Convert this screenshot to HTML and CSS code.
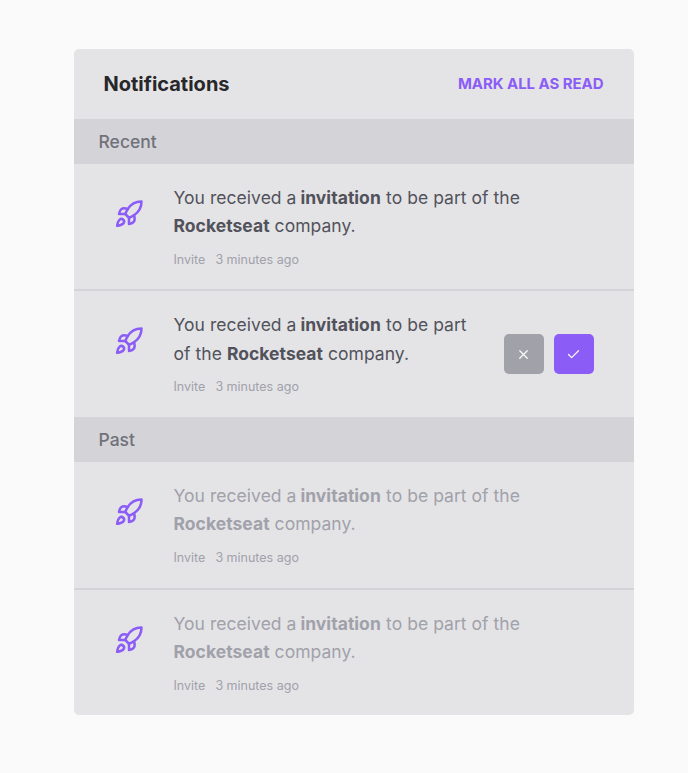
FILE: index.html
```html
<!DOCTYPE html>
<html lang="en">
<head>
<meta charset="utf-8">
<title>Notifications</title>
<link rel="stylesheet" href="styles.css">
</head>
<body>
<svg width="0" height="0" class="defs" aria-hidden="true">
  <symbol id="rocket" viewBox="0 0 24 24">
    <path d="M4.5 16.5c-1.5 1.26-2 5-2 5s3.74-.5 5-2c.71-.84.7-2.13-.09-2.91a2.18 2.18 0 0 0-2.91-.09z"/>
    <path d="m12 15-3-3a22 22 0 0 1 2-3.95A12.88 12.88 0 0 1 22 2c0 2.72-.78 7.5-6 11a22.35 22.35 0 0 1-4 2z"/>
    <path d="M9 12H4s.55-3.03 2-4c1.62-1.08 5 0 5 0"/>
    <path d="M12 15v5s3.03-.55 4-2c1.08-1.62 0-5 0-5"/>
  </symbol>
</svg>
<main class="panel">
  <header class="header">
    <h1>Notifications</h1>
    <button class="mark">MARK ALL AS READ</button>
  </header>
  <section>
    <h2 class="group">Recent</h2>
    <article class="item">
      <svg class="rocket"><use href="#rocket"/></svg>
      <div class="content">
        <p class="text">You received a <strong>invitation</strong> to be part of the <strong>Rocketseat</strong> company.</p>
        <div class="meta"><span>Invite</span><span>3 minutes ago</span></div>
      </div>
    </article>
    <article class="item">
      <svg class="rocket"><use href="#rocket"/></svg>
      <div class="content">
        <p class="text">You received a <strong>invitation</strong> to be part of the <strong>Rocketseat</strong> company.</p>
        <div class="meta"><span>Invite</span><span>3 minutes ago</span></div>
      </div>
      <div class="actions">
        <button class="action" aria-label="Decline"><svg viewBox="0 0 24 24"><path d="M18 6 6 18M6 6l12 12"/></svg></button>
        <button class="action accept" aria-label="Accept"><svg viewBox="0 0 24 24"><path d="M20 6 9 17l-5-5"/></svg></button>
      </div>
    </article>
  </section>
  <section>
    <h2 class="group">Past</h2>
    <article class="item past">
      <svg class="rocket"><use href="#rocket"/></svg>
      <div class="content">
        <p class="text">You received a <strong>invitation</strong> to be part of the <strong>Rocketseat</strong> company.</p>
        <div class="meta"><span>Invite</span><span>3 minutes ago</span></div>
      </div>
    </article>
    <article class="item past">
      <svg class="rocket"><use href="#rocket"/></svg>
      <div class="content">
        <p class="text">You received a <strong>invitation</strong> to be part of the <strong>Rocketseat</strong> company.</p>
        <div class="meta"><span>Invite</span><span>3 minutes ago</span></div>
      </div>
    </article>
  </section>
</main>
</body>
</html>
```
FILE: styles.css
```css
* { box-sizing: border-box; margin: 0; padding: 0; }
body { background: #fafafa; font-family: Inter, sans-serif; }
.defs { position: absolute; }
button { border: 0; background: none; font-family: inherit; }
.panel {
  width: 560px;
  margin: 48.75px 0 0 73.5px;
  background: #e4e4e7;
  border-radius: 5px;
  overflow: hidden;
}
.header {
  height: 70px;
  padding: 0 30px;
  display: flex;
  align-items: center;
  justify-content: space-between;
}
h1 { font-size: 20px; font-weight: 700; color: #27272a; }
.mark { font-size: 15px; font-weight: 700; color: #8b5cf6; letter-spacing: -0.05px; line-height: 18px; }
.group {
  height: 45px;
  padding-left: 25px;
  background: #d4d4d8;
  color: #71717a;
  font-size: 17.5px;
  font-weight: 500;
  line-height: 45px;
}
.item {
  display: flex;
  padding: 20px 40px;
  color: #52525b;
}
.item + .item { border-top: 2px solid #d4d4d8; }
.rocket {
  width: 30px;
  height: 30px;
  margin: 15px 30px 0 0;
  flex: none;
  fill: none;
  stroke: #8b5cf6;
  stroke-width: 2;
  stroke-linecap: round;
  stroke-linejoin: round;
}
.content { flex: 1; }
.text { font-size: 17.5px; line-height: 28.125px; letter-spacing: 0.04px; }
.text strong:first-child { margin-left: -1px; margin-right: 0.3px; }
.meta {
  display: flex;
  gap: 10px;
  margin-top: 9.75px;
  padding-bottom: 0.25px;
  font-size: 12.5px;
  line-height: 19.375px;
  color: #a1a1aa;
}
.past { color: #a1a1aa; }
.actions {
  display: flex;
  gap: 10px;
  align-items: center;
  margin-left: 30px;
}
.action {
  width: 40px;
  height: 40px;
  border-radius: 5px;
  background: #a1a1aa;
  display: grid;
  place-items: center;
}
.accept { background: #8b5cf6; }
.action svg {
  width: 15px;
  height: 15px;
  fill: none;
  stroke: #fafafa;
  stroke-width: 2;
  stroke-linecap: round;
  stroke-linejoin: round;
}
```
